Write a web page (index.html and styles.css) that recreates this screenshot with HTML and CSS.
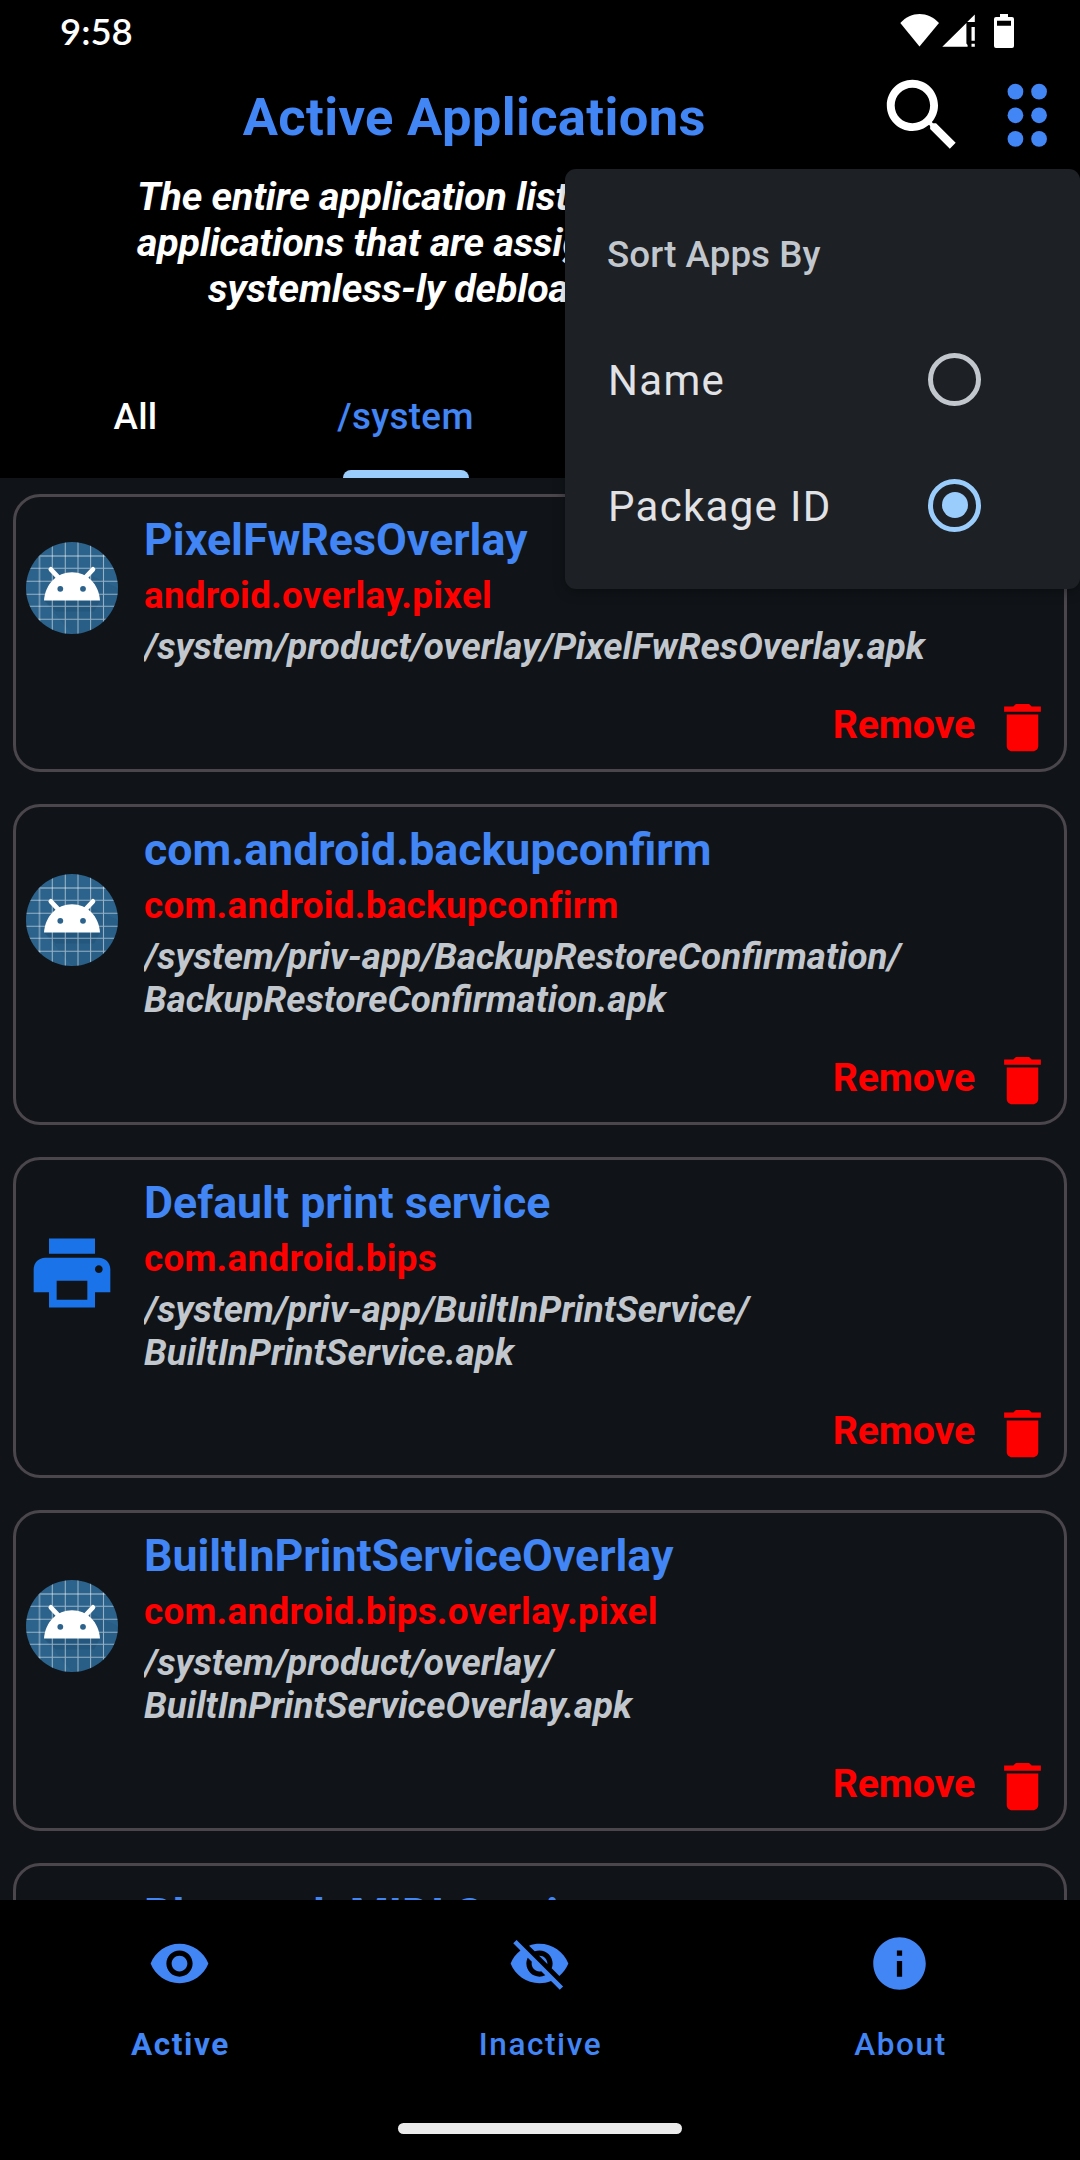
FILE: index.html
```html
<!DOCTYPE html>
<html lang="en">
<head>
<meta charset="utf-8">
<title>Active Applications</title>
<link rel="stylesheet" href="styles.css">
</head>
<body>
<svg class="defs" aria-hidden="true">
  <symbol id="trash" viewBox="0 0 24 24"><path d="M6 19c0 1.1.9 2 2 2h8c1.1 0 2-.9 2-2V7H6v12zM19 4h-3.500l-1-1h-5l-1 1H5v2h14V4z"/></symbol>
  <symbol id="launcher" viewBox="0 0 92 92">
    <clipPath id="disc"><circle cx="46" cy="46" r="46"/></clipPath>
    <g clip-path="url(#disc)">
      <rect width="92" height="92" fill="#2c638c"/>
      <path d="M18 58.500L46 92H92V46L66 34z" fill="#1d4a70" opacity=".18"/>
      <path d="M18 58.500l12 11h38l6-11z" fill="#1d4a70" opacity=".35"/>
      <path d="M13.500 0v92M0 14h92" stroke="#fff" stroke-opacity=".32" stroke-width="1.800"/>
      <path d="M26.300 0v92M39.300 0v92M52 0v92M64.600 0v92M77.500 0v92M0 26.300h92M0 39.300h92M0 52.300h92M0 64.300h92M0 77.300h92" stroke="#fff" stroke-opacity=".5" stroke-width="1.100"/>
      <path d="M24.800 27.300l8 8.500M67 27.300l-8 8.500" stroke="#fff" stroke-width="4.600" stroke-linecap="round"/>
      <path d="M18 58.600C19 42 31 30.200 46 30.200S73 42 74 58.600z" fill="#fff"/>
      <circle cx="34.300" cy="46.800" r="2.900" fill="#2c638c"/><circle cx="57" cy="46.800" r="2.900" fill="#2c638c"/>
    </g>
  </symbol>
</svg>

<main class="phone">
  <header class="header">
    <div class="status">
      <span class="clock">9:58</span>
      <svg class="status-icons" viewBox="900 12 116 38" fill="#fff">
        <path d="M900.300 23C911 11 928 11 939 23L919.500 46.600z"/>
        <path d="M942.300 46.800L966.400 23v20.500l1.200 1.500v1.800zM967.200 22L974.800 14.600V22zM971.500 27h3.300v13.800h-3.300zM971.500 43.800h3.300v3h-3.300z"/>
        <path fill-rule="evenodd" d="M1000 14h8v3h4q2 0 2 2v27q0 2-2 2h-16q-2 0-2-2V19q0-2 2-2h4zM997 20.800v5h14v-5z"/>
      </svg>
    </div>
    <div class="toolbar">
      <h1 class="title">Active Applications</h1>
      <svg class="tool" viewBox="0 0 24 24" fill="#fff"><path d="M15.500 14h-.79l-.28-.27C15.410 12.590 16 11.110 16 9.500 16 5.910 13.090 3 9.500 3S3 5.910 3 9.500 5.910 16 9.500 16c1.610 0 3.090-.59 4.230-1.570l.27.28v.79l5 4.990L20.490 19l-4.990-5zm-6 0C7.010 14 5 11.990 5 9.500S7.010 5 9.500 5 14 7.010 14 9.500 11.990 14 9.500 14z"/></svg>
      <svg class="tool" viewBox="0 0 24 24" fill="#4285f4"><circle cx="9" cy="6" r="2"/><circle cx="9" cy="12" r="2"/><circle cx="9" cy="18" r="2"/><circle cx="15" cy="6" r="2"/><circle cx="15" cy="12" r="2"/><circle cx="15" cy="18" r="2"/></svg>
    </div>
    <div class="intro">
      <p class="intro-line">The entire application list</p>
      <p class="intro-line">applications that are assig</p>
      <p class="intro-line intro-last">systemless-ly debloa</p>
    </div>
    <nav class="tabs">
      <span class="tab">All</span>
      <span class="tab tab-on">/system</span>
    </nav>
  </header>

  <section class="list">
    <article class="card">
      <div class="info">
        <svg class="icon"><use href="#launcher"/></svg>
        <div class="text"><h2 class="name">PixelFwResOverlay</h2><p class="pkg">android.overlay.pixel</p><p class="path">/system/product/overlay/PixelFwResOverlay.apk</p></div>
      </div>
      <div class="action"><span>Remove</span><svg class="bin"><use href="#trash"/></svg></div>
    </article>
    <article class="card">
      <div class="info">
        <svg class="icon"><use href="#launcher"/></svg>
        <div class="text"><h2 class="name">com.android.backupconfirm</h2><p class="pkg">com.android.backupconfirm</p><p class="path">/system/priv-app/BackupRestoreConfirmation/<br>BackupRestoreConfirmation.apk</p></div>
      </div>
      <div class="action"><span>Remove</span><svg class="bin"><use href="#trash"/></svg></div>
    </article>
    <article class="card">
      <div class="info">
        <svg class="icon" viewBox="0 0 24 24" fill="#1a73e8"><path d="M19 8H5c-1.660 0-3 1.340-3 3v6h4v4h12v-4h4v-6c0-1.660-1.340-3-3-3zm-3 11H8v-5h8v5zm3-7c-.55 0-1-.45-1-1s.45-1 1-1 1 .45 1 1-.45 1-1 1zm-1-9H6v4h12V3z"/></svg>
        <div class="text"><h2 class="name">Default print service</h2><p class="pkg">com.android.bips</p><p class="path">/system/priv-app/BuiltInPrintService/<br>BuiltInPrintService.apk</p></div>
      </div>
      <div class="action"><span>Remove</span><svg class="bin"><use href="#trash"/></svg></div>
    </article>
    <article class="card">
      <div class="info">
        <svg class="icon"><use href="#launcher"/></svg>
        <div class="text"><h2 class="name">BuiltInPrintServiceOverlay</h2><p class="pkg">com.android.bips.overlay.pixel</p><p class="path">/system/product/overlay/<br>BuiltInPrintServiceOverlay.apk</p></div>
      </div>
      <div class="action"><span>Remove</span><svg class="bin"><use href="#trash"/></svg></div>
    </article>
    <article class="card">
      <div class="info">
        <div class="icon"></div>
        <div class="text"><h2 class="name">Bluetooth MIDI Service</h2></div>
      </div>
    </article>
  </section>

  <footer class="footer">
    <nav class="nav">
      <a class="nav-item nav-on"><svg class="nav-icon" viewBox="0 0 24 24"><path d="M12 4.500C7 4.500 2.730 7.610 1 12c1.730 4.390 6 7.500 11 7.500s9.270-3.110 11-7.500c-1.730-4.390-6-7.500-11-7.500zM12 17c-2.760 0-5-2.240-5-5s2.240-5 5-5 5 2.240 5 5-2.240 5-5 5zm0-8c-1.660 0-3 1.340-3 3s1.340 3 3 3 3-1.340 3-3-1.340-3-3-3z"/></svg><span>Active</span></a>
      <a class="nav-item"><svg class="nav-icon" viewBox="0 0 24 24"><path d="M12 7c2.760 0 5 2.240 5 5 0 .65-.13 1.260-.36 1.830l2.920 2.920c1.510-1.260 2.700-2.890 3.430-4.750-1.730-4.390-6-7.500-11-7.500-1.400 0-2.740.25-3.980.7l2.160 2.160C10.740 7.130 11.350 7 12 7zM2 4.270l2.280 2.280.46.46C3.080 8.300 1.780 10.020 1 12c1.730 4.390 6 7.500 11 7.500 1.550 0 3.030-.3 4.380-.84l.42.42L19.730 22 21 20.730 3.270 3 2 4.270zM7.530 9.800l1.550 1.550c-.05.21-.08.43-.08.65 0 1.660 1.340 3 3 3 .22 0 .44-.03.65-.08l1.550 1.550c-.67.33-1.410.53-2.200.53-2.760 0-5-2.240-5-5 0-.79.2-1.530.53-2.200zm4.310-.78l3.150 3.150.02-.16c0-1.660-1.340-3-3-3l-.17.01z"/></svg><span>Inactive</span></a>
      <a class="nav-item"><svg class="nav-icon" viewBox="0 0 24 24"><path d="M12 2C6.480 2 2 6.480 2 12s4.480 10 10 10 10-4.480 10-10S17.520 2 12 2zm1 15h-2v-6h2v6zm0-8h-2V7h2v2z"/></svg><span>About</span></a>
    </nav>
    <div class="home-bar"></div>
  </footer>

  <aside class="menu">
    <div class="menu-head">Sort Apps By</div>
    <div class="option"><span>Name</span><i class="radio"></i></div>
    <div class="option"><span>Package ID</span><i class="radio radio-on"></i></div>
  </aside>
</main>
</body>
</html>
```
FILE: styles.css
```css
* { box-sizing: border-box; }
body, h1, h2, p { margin: 0; }
body { background: #000; font-family: Roboto, sans-serif; }
.defs { position: absolute; width: 0; height: 0; }
svg { display: block; flex: none; }

.phone {
  position: relative;
  display: flex;
  flex-direction: column;
  width: 1080px;
  height: 2160px;
  overflow: hidden;
  background: #101418;
}

.header { display: flex; flex-direction: column; height: 478px; background: #000; }
.status {
  display: flex;
  justify-content: space-between;
  align-items: flex-start;
  height: 68px;
  padding: 12px 64px 0 60px;
}
.clock { font: 600 36.5px/38px Lato, sans-serif; color: #fff; }
.status-icons { width: 116px; height: 38px; }

.toolbar { display: flex; height: 95px; padding: 0 6px 0 74px; }
.title {
  flex: 1;
  text-align: center;
  font-size: 52.5px;
  line-height: 98px;
  letter-spacing: .35px;
  color: #4285f4;
}
.tool { width: 94.5px; height: 94.5px; }
.tool + .tool { margin-left: 10.5px; }

.intro { padding: 11px 0 0 137px; }
.intro-line {
  font: italic bold 39.375px/46px Roboto, sans-serif;
  letter-spacing: -.2px;
  white-space: nowrap;
  color: #fff;
}
.intro-last { padding-left: 71px; }

.tabs { display: grid; grid-template-columns: repeat(4, 270px); height: 126px; margin-top: auto; }
.tab {
  display: flex;
  flex-direction: column;
  align-items: center;
  padding: 43px 0 0 1px;
  font-size: 36.75px;
  font-weight: 500;
  line-height: 43px;
  letter-spacing: .35px;
  color: #fff;
}
.tab-on { color: #4285f4; }
.tab-on::after {
  content: "";
  width: 126px;
  height: 8px;
  margin-top: auto;
  border-radius: 8px 8px 0 0;
  background: #9accfc;
}

.list {
  display: flex;
  flex-direction: column;
  gap: 32px;
  height: 1422px;
  padding: 16px 13px 0;
  overflow: hidden;
}
.card { flex: none; border: 3px solid #4a464c; border-radius: 27px; }
.info { display: flex; align-items: center; gap: 26px; padding-left: 10px; }
.icon { flex: none; width: 92px; height: 92px; }
.text { flex: 1; overflow: hidden; padding: 17px 0 11px; }
.name { font-size: 44.7px; line-height: 53px; color: #4285f4; }
.pkg {
  margin: 7px 0 8px;
  font-size: 36.75px;
  font-weight: bold;
  line-height: 43px;
  letter-spacing: .3px;
  color: #f00;
}
.path { font: italic bold 36.75px/43px Roboto, sans-serif; color: #c2c7ce; }
.action {
  display: flex;
  justify-content: flex-end;
  align-items: center;
  gap: 16px;
  height: 90px;
  padding: 7px 10px 0 0;
  font-size: 39.375px;
  font-weight: bold;
  line-height: 46px;
  letter-spacing: -.2px;
  color: #f00;
}
.action span { margin-bottom: 6px; }
.bin { width: 63px; height: 63px; fill: #f00; }

.footer {
  display: flex;
  flex-direction: column;
  justify-content: space-between;
  align-items: center;
  height: 260px;
  padding: 32px 0 26px;
  background: #000;
}
.nav { display: grid; grid-template-columns: repeat(3, 360px); }
.nav-item {
  display: flex;
  flex-direction: column;
  align-items: center;
  gap: 31px;
  font-size: 31.5px;
  font-weight: 500;
  line-height: 38px;
  letter-spacing: 1.6px;
  color: #4285f4;
}
.nav-item span { margin-left: 1px; }
.nav-on { font-weight: bold; }
.nav-icon { width: 63px; height: 63px; margin-right: 1px; fill: #4285f4; }
.home-bar { width: 284px; height: 11px; border-radius: 5.5px; background: #ebebeb; }

.menu {
  position: absolute;
  top: 169px;
  right: 0;
  width: 515px;
  height: 420px;
  padding: 21px 99px 21px 42px;
  border-radius: 11px;
  background: #1d2024;
  box-shadow: 0 3px 12px rgba(0, 0, 0, .35);
}
.menu-head {
  height: 126px;
  font-size: 36.75px;
  font-weight: 500;
  line-height: 129px;
  letter-spacing: .05px;
  color: #c2c7ce;
}
.option {
  display: flex;
  justify-content: space-between;
  align-items: center;
  height: 126px;
  font-size: 42px;
  line-height: 50px;
  letter-spacing: 1.3px;
  color: #e1e2e6;
}
.option span { padding: 3px 0 0 1px; }
.radio {
  display: flex;
  width: 53px;
  height: 53px;
  border: 5.25px solid #c2c7ce;
  border-radius: 50%;
}
.radio-on { border-color: #9accfc; }
.radio-on::before {
  content: "";
  width: 26px;
  height: 26px;
  margin: auto;
  border-radius: 50%;
  background: #9accfc;
}
```
